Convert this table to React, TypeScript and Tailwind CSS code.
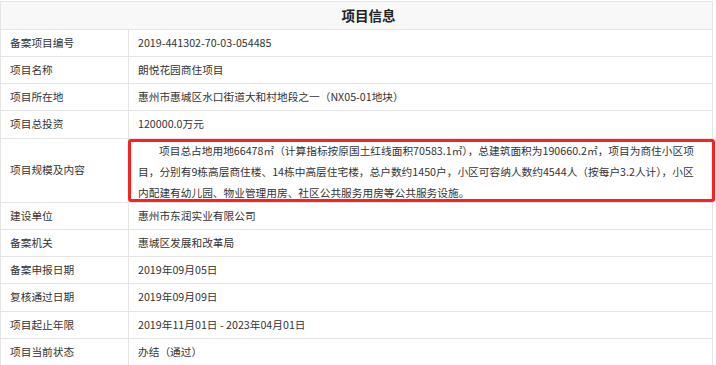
import React from "react";

const rows: [string, React.ReactNode][] = [
  ["备案项目编号", "2019-441302-70-03-054485"],
  ["项目名称", "朗悦花园商住项目"],
  ["项目所在地", "惠州市惠城区水口街道大和村地段之一（NX05-01地块）"],
  ["项目总投资", "120000.0万元"],
];

const rows2: [string, string][] = [
  ["建设单位", "惠州市东润实业有限公司"],
  ["备案机关", "惠城区发展和改革局"],
  ["备案申报日期", "2019年09月05日"],
  ["复核通过日期", "2019年09月09日"],
  ["项目起止年限", "2019年11月01日 - 2023年04月01日"],
  ["项目当前状态", "办结（通过）"],
];

function Row({ label, value, h }: { label: string; value: React.ReactNode; h: string }) {
  return (
    <div className={`flex border-b border-[#e5e5e5] ${h}`}>
      <div className="w-[128px] shrink-0 border-r border-[#e5e5e5] pl-[9px] flex items-center">{label}</div>
      <div className="flex-1 pl-[9px] flex items-center whitespace-nowrap">{value}</div>
    </div>
  );
}

export default function App() {
  return (
    <div
      className="w-[716px] h-[365px] bg-white overflow-hidden pt-px text-[10.7px] text-[#333]"
      style={{ fontFamily: '"Noto Sans CJK SC", "Microsoft YaHei", sans-serif' }}
    >
      <div className="relative w-[713px] border-l border-t border-r border-[#e5e5e5]">
        <div className="h-[28px] bg-[#f8f8f8] border-b border-[#e5e5e5] flex items-center justify-center pl-[24px] text-[13.5px] font-bold text-[#222]">
          项目信息
        </div>
        {rows.map(([l, v], i) => (
          <Row key={l} label={l} value={v} h={i === 3 ? "h-[28px]" : "h-[27px]"} />
        ))}
        <div className="flex border-b border-[#e5e5e5] h-[64px]">
          <div className="w-[128px] shrink-0 border-r border-[#e5e5e5] pl-[9px] flex items-center">项目规模及内容</div>
          <div className="flex-1 pl-[9px] pt-[1px] leading-[21px] whitespace-nowrap">
            <div className="pl-[21px]">项目总占地用地66478㎡（计算指标按原国土红线面积70583.1㎡），总建筑面积为190660.2㎡，项目为商住小区项</div>
            <div>目，分别有9栋高层商住楼、14栋中高层住宅楼，总户数约1450户，小区可容纳人数约4544人（按每户3.2人计），小区</div>
            <div>内配建有幼儿园、物业管理用房、社区公共服务用房等公共服务设施。</div>
          </div>
        </div>
        {rows2.map(([l, v], i) => (
          <Row key={l} label={l} value={v} h={i === 3 ? "h-[28px]" : "h-[27px]"} />
        ))}
        <div className="absolute left-[127px] top-[137px] w-[587px] h-[63px] border-[3px] border-[#ff1f1f] rounded-[3px] pointer-events-none" />
      </div>
    </div>
  );
}
